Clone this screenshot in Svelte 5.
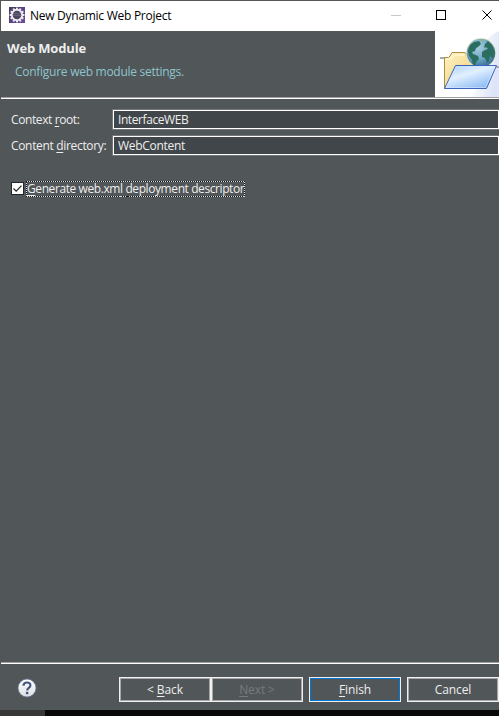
<script>
  const fields = [
    { before: 'Context ', key: 'r', after: 'oot:', value: 'InterfaceWEB', ls: -0.4, vls: -0.42 },
    { before: 'Content ', key: 'd', after: 'irectory:', value: 'WebContent', ls: -0.33, vls: -0.3 }
  ];
  const teeth = Array.from({ length: 12 }, (_, i) => i * 30);
</script>

<div class="window">
  <header class="titlebar">
    <svg class="app" width="16" height="16" viewBox="0 0 16 16">
      <defs>
        <linearGradient id="violet" x2="1" y2="1"><stop stop-color="#483a5d" /><stop offset="1" stop-color="#6b4ca5" /></linearGradient>
      </defs>
      <rect width="16" height="16" fill="url(#violet)" />
      {#each teeth as a}
        <rect x="7" y="0.6" width="2" height="3" fill="#eee9ef" transform="rotate({a} 8 8)" />
      {/each}
      <circle cx="8" cy="8" r="5.2" fill="#4b4562" stroke="#ece8ed" stroke-width="1.9" />
      <path d="M4 6.6h8M3.8 8.4h8.4" stroke="#77738c" stroke-width=".7" />
    </svg>
    <span class="title">New Dynamic Web Project</span>
    <svg class="controls" width="109" height="30" viewBox="0 0 109 30" fill="none" shape-rendering="crispEdges">
      <path d="M1 14.5h10" stroke="#c9c9c9" />
      <rect x="46.5" y="9.5" width="9" height="9" stroke="#000" />
      <path d="M92.5 9.5l9 9M101.5 9.5l-9 9" stroke="#000" shape-rendering="auto" />
    </svg>
  </header>

  <section class="banner">
    <div class="heading">
      <h1>Web Module</h1>
      <p>Configure web module settings.</p>
    </div>
    <svg width="64" height="66" viewBox="0 0 64 66">
      <defs>
        <linearGradient id="sky" x1="0" y1="0" x2="1" y2=".4"><stop offset=".3" stop-color="#fff" /><stop offset="1" stop-color="#dfe5f8" /></linearGradient>
        <linearGradient id="front" x1="0" y1="0" x2=".7" y2="1"><stop stop-color="#a4caf5" /><stop offset=".45" stop-color="#e2f0ff" /><stop offset="1" stop-color="#8bbaf4" /></linearGradient>
        <linearGradient id="back" x2="1" y2="1"><stop stop-color="#fff3c0" /><stop offset="1" stop-color="#edca78" /></linearGradient>
        <radialGradient id="sea" cx=".4" cy=".3" r=".75"><stop stop-color="#a9cde0" /><stop offset=".55" stop-color="#6ea7c6" /><stop offset="1" stop-color="#2f6690" /></radialGradient>
        <clipPath id="disc"><circle cx="46" cy="22" r="14" /></clipPath>
      </defs>
      <rect width="64" height="66" fill="#fff" />
      <path d="M64 0C47 7 44 23 45 39c0 13-5 22-11 27h30z" fill="url(#sky)" />
      <path d="M5 26h5v2H5zM61 35h3v2h-3z" fill="#aaa" />
      <path d="M9.5 57V26.5h4l1.5-1.5 2-3.5h13l2.5 3.5H41V57z" fill="url(#back)" stroke="#ad8c43" />
      <path d="M11 28h5l3-4h10" fill="none" stroke="#fff6cf" stroke-width="1.5" />
      <circle cx="46" cy="22" r="15" fill="#f0e6b8" />
      <circle cx="46" cy="22" r="14.3" fill="url(#sea)" />
      <g clip-path="url(#disc)" fill="#2b6e60">
        <path d="M33 19l2-5 4-3 5-1 2 3-3 3-2 1-1 3-3 1 1 2 5 2 1 3-3 3-1 4-2-1-1-5-3-4-1-4z" />
        <path d="M50 13l3-3 4 4 3 7-1 5-2 1-2-2-1 5-2 2-2-5-3-1v-5l3-2 3-1-2-2-2 1z" />
        <path d="M44 9l5-1 1 2-4 1z" fill="#8ab4a0" />
      </g>
      <path d="M20.5 34.5h41L51.5 57.5h-42z" fill="url(#front)" stroke="#3c65ba" stroke-linejoin="round" />
      <path d="M21.5 36h38L50.5 56.5H11z" fill="none" stroke="#d8eaff" stroke-width=".6" />
    </svg>
  </section>

  <main>
    {#each fields as f}
      <div class="row">
        <span class="label" style:letter-spacing="{f.ls}px">{f.before}<u>{f.key}</u>{f.after}</span>
        <div class="input"><span style:letter-spacing="{f.vls}px">{f.value}</span></div>
      </div>
    {/each}
    <div class="check">
      <svg width="13" height="13" viewBox="0 0 13 13">
        <rect x=".5" y=".5" width="12" height="12" fill="#fff" stroke="#262626" />
        <path d="M2.5 6.5l2.7 2.7 5.3-5.5" fill="none" stroke="#222" stroke-width="1.2" />
      </svg>
      <div class="focus">
        <svg width="219" height="16" fill="none" shape-rendering="crispEdges"><rect x=".5" y=".5" width="218" height="15" stroke="#151515" /><rect x=".5" y=".5" width="218" height="15" stroke="#ddd" stroke-dasharray="1 1" /></svg>
        <span><u>G</u>enerate web.xml deployment descriptor</span>
      </div>
    </div>
  </main>

  <footer>
    <svg class="help" width="20" height="20" viewBox="0 0 20 20">
      <defs><linearGradient id="pearl" x2="0" y2="1"><stop stop-color="#fff" /><stop offset="1" stop-color="#dcdee2" /></linearGradient></defs>
      <circle cx="10" cy="10" r="9" fill="url(#pearl)" stroke="#6b7a9b" stroke-width=".8" />
      <path d="M6.5 7.8C6.5 3.4 13.5 3.5 13.4 7.4c0 2.5-3.2 2.5-3.2 5" fill="none" stroke="#46587f" stroke-width="2.2" />
      <rect x="8.9" y="13.8" width="2.4" height="2.4" fill="#46587f" />
    </svg>
    <button class="back"><span>&lt; <u>B</u>ack</span></button>
    <button class="next"><span><u>N</u>ext &gt;</span></button>
    <button class="finish"><span><u>F</u>inish</span></button>
    <button class="cancel"><span>Cancel</span></button>
  </footer>
</div>
<div class="under"><i></i></div>

<style>
  :global(body) { background: #080808; overflow: hidden; }
  .window {
    box-sizing: border-box; width: 499px; height: 710px; border: solid #555558; border-width: 1px 0 0 1px;
    background: #515658; display: flex; flex-direction: column; color: #eee;
    font: 12px/16px "Open Sans", "Noto Sans", sans-serif; white-space: nowrap;
  }
  u { text-decoration: underline; text-decoration-thickness: 1px; text-underline-offset: 2px; text-decoration-skip-ink: none; }
  svg { display: block; flex: none; }
  .titlebar { height: 30px; background: #fff; color: #000; display: flex; }
  .app { margin: 6px 5px 0 8px; }
  .title { padding-top: 7px; letter-spacing: -0.27px; }
  .controls { margin-left: auto; }
  .banner { height: 66px; display: flex; justify-content: space-between; }
  h1 { margin: 9px 0 0 6px; font-size: 13px; line-height: 16px; font-weight: 700; letter-spacing: -0.15px; }
  p { margin: 8px 0 0 14px; color: #8fc4ce; letter-spacing: -0.27px; }
  main { flex: 1; border: solid #fff; border-width: 1px 0; box-shadow: 0 -1px #a0a0a0, inset 0 -1px #a0a0a0; margin-top: 1px; padding-top: 10px; }
  .row { display: flex; height: 21px; margin-bottom: 5px; }
  .label { width: 101px; padding: 3px 0 0 10px; box-sizing: border-box; }
  .input { flex: 1; border: 1px solid #fff; box-shadow: 0 0 0 1px #737779; margin: 1px 0 0 11px; background: #41464a; box-sizing: border-box; height: 19px; padding-left: 4px; line-height: 17px; }
  .check { display: flex; margin: 25px 0 0 10px; align-items: flex-start; }
  .check > svg { margin-top: 1px; }
  .focus { position: relative; margin-left: 2px; height: 16px; }
  .focus svg { position: absolute; inset: 0 auto auto 0; }
  .focus span { letter-spacing: -0.41px; display: block; line-height: 16px; padding-left: 1px; }
  footer { height: 46px; display: flex; align-items: flex-start; padding-left: 16px; }
  .help { margin: 14px 82px 0 0; }
  button {
    box-sizing: border-box; width: 92px; height: 25px; margin: 13px 0 0; padding: 0; border: 1px solid #f0f0f0;
    box-shadow: inset 0 0 0 1px #a7a7a7; background: transparent; color: #eee; font: inherit; line-height: 23px; letter-spacing: -0.1px; flex: none;
  }
  .next { color: #777b7d; }
  .finish { margin-left: 6px; box-shadow: inset 0 0 0 1px #0078d7; }
  .cancel { margin-left: 6px; }
  .under { height: 6px; background: #080808; }
  .under i { display: block; width: 45px; height: 6px; background: #373737; }
</style>
